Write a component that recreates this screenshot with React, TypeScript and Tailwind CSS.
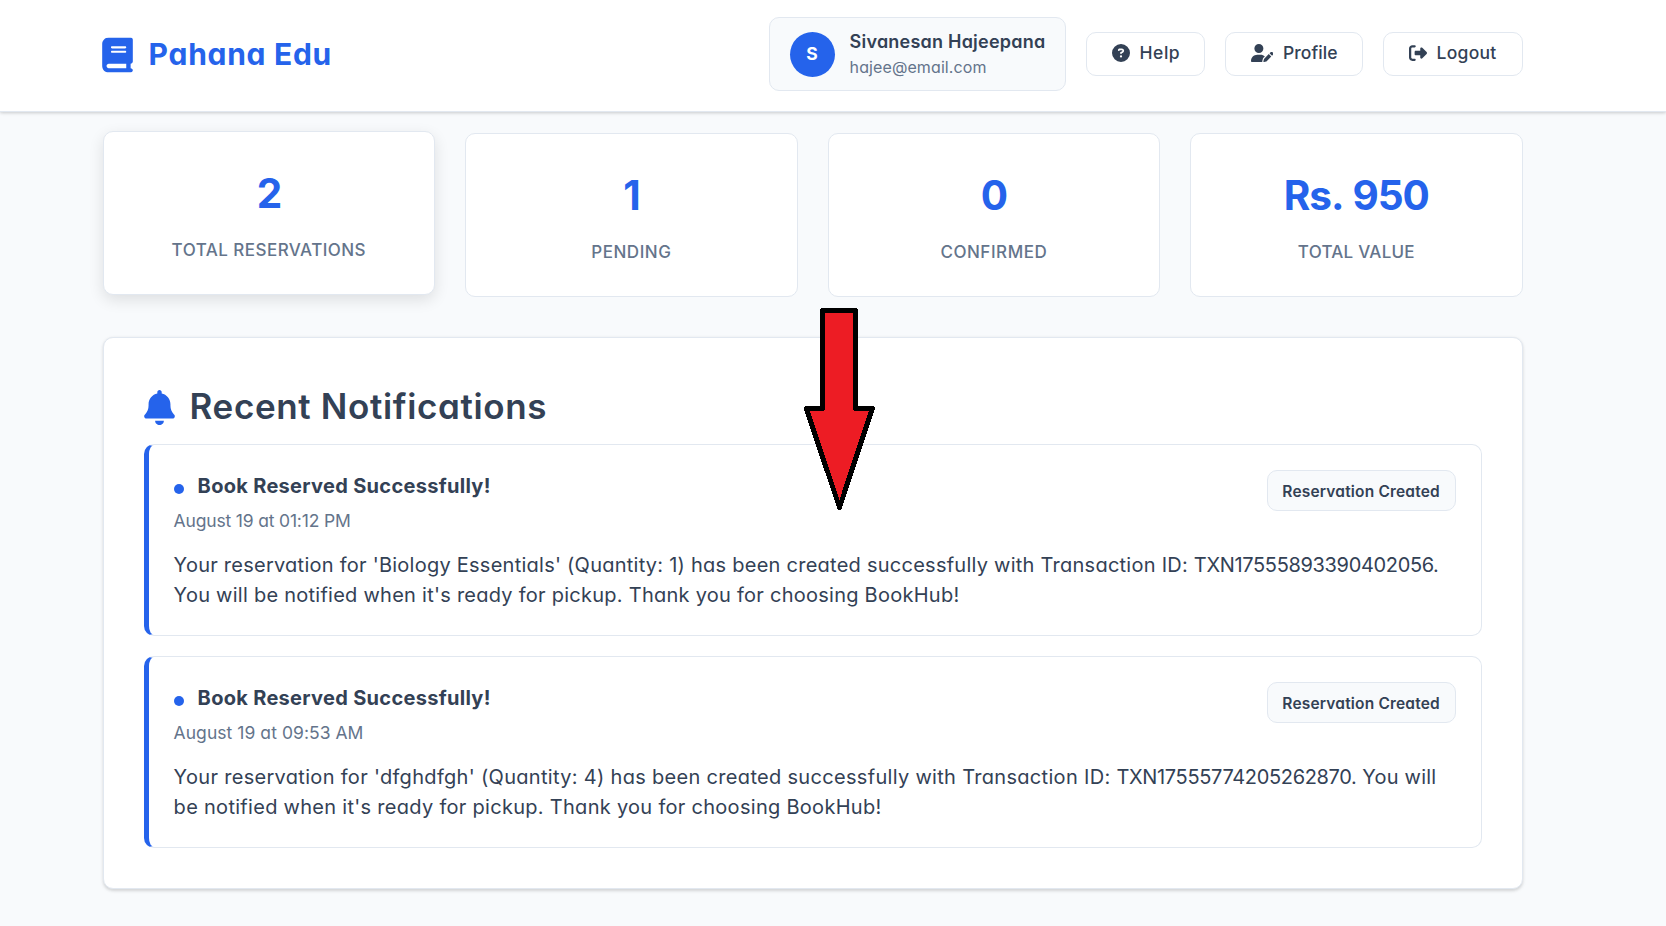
import { FaBell, FaBook, FaCircleQuestion, FaRightFromBracket, FaUserPen } from "react-icons/fa6";

const stats = [
  { value: "2", label: "TOTAL RESERVATIONS", ls: "tracking-[0.46px]", raised: true },
  { value: "1", label: "PENDING", ls: "tracking-[0.54px]", raised: false },
  { value: "0", label: "CONFIRMED", ls: "tracking-[0.53px]", raised: false },
  { value: "Rs. 950", label: "TOTAL VALUE", ls: "tracking-[0.25px]", raised: false },
];

const notifications = [
  {
    date: "August 19 at 01:12 PM",
    dateLs: "tracking-[-0.17px]",
    lines: [
      { text: "Your reservation for 'Biology Essentials' (Quantity: 1) has been created successfully with Transaction ID: ", id: "TXN17555893390402056.", rest: "", ls: "tracking-[0.25px]" },
      { text: "You will be notified when it's ready for pickup. Thank you for choosing BookHub!", id: "", rest: "", ls: "tracking-[0.256px]" },
    ],
  },
  {
    date: "August 19 at 09:53 AM",
    dateLs: "tracking-[0.05px]",
    lines: [
      { text: "Your reservation for 'dfghdfgh' (Quantity: 4) has been created successfully with Transaction ID: ", id: "TXN17555774205262870.", rest: " You will", ls: "tracking-[0.31px]" },
      { text: "be notified when it's ready for pickup. Thank you for choosing BookHub!", id: "", rest: "", ls: "tracking-[0.29px]" },
    ],
  },
];

const button = "flex h-11 items-center rounded-[10px] border border-[#e2e8f0] bg-white pb-0.5 text-[17.5px] font-medium";

export default function App() {
  return (
    <div className="relative h-[926px] w-full overflow-hidden bg-[#f8fafc] font-['Inter',sans-serif] text-[#334155] [font-feature-settings:'cv11']">
      <header className="relative h-28 border-b border-[#e2e8f0] bg-white shadow-[0_1.25px_3.75px_rgba(0,0,0,0.12),0_1.25px_2.5px_rgba(0,0,0,0.08)]">
        <div className="ml-[102.6px] flex h-[108px] w-[1420px] items-center justify-between">
          <div className="flex items-center text-[#2563eb]">
            <FaBook className="-ml-[2.5px] size-[35px] translate-y-[0.5px]" />
            <span className="ml-[13.5px] pb-px text-[30px] leading-9 font-bold tracking-[0.72px]">Pahana Edu</span>
          </div>
          <div className="flex items-center gap-5">
            <div className="flex h-[74px] w-[297px] items-center rounded-[10px] border border-[#e2e8f0] bg-[#f8fafc] pl-5">
              <div className="flex size-[45px] items-center justify-center rounded-full bg-[#2563eb] text-[17.5px] font-bold text-white">S</div>
              <div className="ml-[15px] pb-px whitespace-nowrap">
                <div className="text-[18px] leading-[27px] font-semibold tracking-[0.22px]">Sivanesan Hajeepana</div>
                <div className="text-base leading-6 tracking-[0.1px] text-[#64748b]">hajee@email.com</div>
              </div>
            </div>
            <button className={`${button} w-[119px] pl-[25px]`}>
              <FaCircleQuestion className="size-[18px]" />
              <span className="ml-[10px] tracking-[0.5px]">Help</span>
            </button>
            <button className={`${button} w-[138px] pl-[25px]`}>
              <FaUserPen className="h-[18px] w-[22.5px]" />
              <span className="ml-[10px] tracking-[0.05px]">Profile</span>
            </button>
            <button className={`${button} w-[140px] pl-[25px]`}>
              <FaRightFromBracket className="size-[18px]" />
              <span className="ml-[10px] tracking-[0.25px]">Logout</span>
            </button>
          </div>
        </div>
      </header>

      <main className="ml-[102.6px] w-[1420px]">
        <section className="grid grid-cols-4 gap-[30px] pt-[21px]">
          {stats.map((s) => (
            <div
              key={s.label}
              className={`flex h-[164px] flex-col items-center rounded-[10px] border border-[#e2e8f0] bg-white pt-[38px] ${
                s.raised ? "-translate-y-0.5 shadow-[0_5px_15px_rgba(0,0,0,0.11)]" : ""
              }`}
            >
              <div className="text-[40.5px] leading-[48px] font-bold tracking-[-1.1px] text-[#2563eb] [word-spacing:2px]">{s.value}</div>
              <div className={`mt-[20px] text-[17px] leading-6 font-medium text-[#64748b] ${s.ls}`}>{s.label}</div>
            </div>
          ))}
        </section>

        <section className="mt-10 h-[552px] rounded-[10px] border border-[#e2e8f0] bg-white px-10 pt-[43px] shadow-[0_1.25px_3.75px_rgba(0,0,0,0.1),0_1.25px_2.5px_rgba(0,0,0,0.06)]">
          <div className="flex h-[50px] items-center">
            <FaBell className="-ml-0.5 size-[35px] translate-y-px text-[#2563eb]" />
            <h2 className="ml-[13px] text-[35px] leading-[50px] font-semibold tracking-[0.64px]">Recent Notifications</h2>
          </div>
          <div className="mt-[13px] flex flex-col gap-5">
            {notifications.map((n) => (
              <article key={n.date} className="h-48 rounded-[10px] border border-l-[5px] border-[#e2e8f0] border-l-[#2563eb] bg-white px-[25px] pt-[25px]">
                <div className="flex items-start justify-between">
                  <div className="pt-px">
                    <div className="flex h-[31px] items-center">
                      <span className="mt-[5px] size-2.5 rounded-full bg-[#2563eb]" />
                      <h3 className="ml-[14px] text-[20px] leading-[31px] font-bold tracking-[0.3px]">Book Reserved Successfully!</h3>
                    </div>
                    <div className={`mt-[7px] text-[17.5px] leading-6 text-[#64748b] ${n.dateLs}`}>{n.date}</div>
                  </div>
                  <span className="flex h-[41px] w-[189px] items-center justify-center rounded-[10px] border border-[#e2e8f0] bg-[#f8fafc] pt-0.5 text-[15.5px] font-semibold tracking-[0.17px]">
                    Reservation Created
                  </span>
                </div>
                <p className="mt-[17px] text-[20px] leading-[30px] whitespace-nowrap">
                  {n.lines.map((l) => (
                    <span key={l.text} className={`block ${l.ls}`}>
                      {l.text}
                      {l.id && <span className="tracking-[-0.34px]">{l.id}</span>}
                      {l.rest && <span className="tracking-[0.2px]">{l.rest}</span>}
                    </span>
                  ))}
                </p>
              </article>
            ))}
          </div>
        </section>
      </main>

      <svg className="absolute top-[305px] left-[800px]" width="80" height="210" viewBox="800 305 80 210" shapeRendering="crispEdges">
        <polygon points="822.5,310.5 855.5,310.5 855.5,408.7 872.3,408.7 839.5,507.5 806.5,408.7 822.5,408.7" fill="#ed1c24" stroke="#000" strokeWidth="5" strokeLinejoin="round" />
      </svg>
    </div>
  );
}
